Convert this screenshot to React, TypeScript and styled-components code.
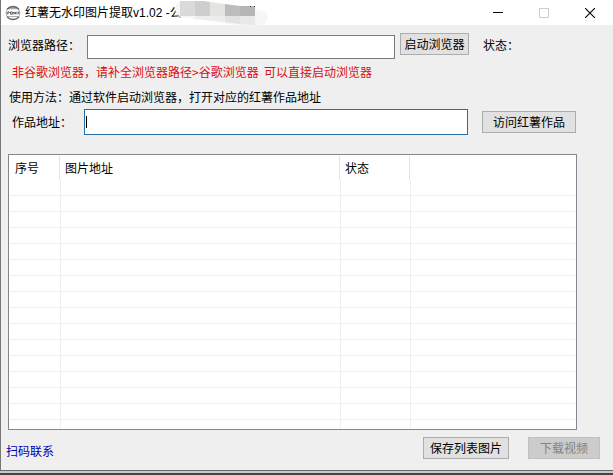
import React from "react";
import styled, { createGlobalStyle } from "styled-components";

const GlobalStyle = createGlobalStyle`
  *, *::before, *::after { box-sizing: border-box; }
  body {
    margin: 0;
    background: #444345;
    color: #000;
    font: 12px/16px "Noto Sans CJK SC", sans-serif;
  }
  button, input { font: inherit; color: inherit; }
`;

const Window = styled.main`
  background: #efefef;
  border-left: 1px solid #777;
  border-bottom: 1px solid #68686a;
  box-shadow: 0 2px 0 #c9c7c9;
  margin-bottom: 4px;
`;

const TitleBar = styled.header`
  display: flex;
  align-items: center;
  height: 25px;
  padding-left: 4px;
  background: #fff;
`;

const Title = styled.h1`
  position: relative;
  flex: 1;
  margin: 0 0 0 4px;
  font: 400 12px/16px "Liberation Sans", "Noto Sans CJK SC", sans-serif;
  white-space: nowrap;
`;

const Mosaic = styled.svg`
  position: absolute;
  left: 149px;
  top: -4px;
`;

const WindowButton = styled.button`
  display: grid;
  place-items: center;
  width: 46px;
  height: 25px;
  padding: 0;
  border: 0;
  background: transparent;
`;

const Form = styled.form`
  padding: 8px 37px 0 7px;
`;

const Row = styled.div`
  display: flex;
  align-items: center;
  height: 26px;
`;

const PathRow = styled(Row)`
  align-items: flex-start;
`;

const PathField = styled.div`
  display: flex;
  flex: 1;
  min-width: 0;
  padding-top: 2px;
  margin-right: 5px;
`;

const VisitSlot = styled.div`
  display: flex;
  margin-left: 14px;
`;

const FieldLabel = styled.label<{ $width: number; $indent: number }>`
  flex: none;
  width: ${(p) => p.$width}px;
  padding-left: ${(p) => p.$indent}px;
  line-height: 24px;
  white-space: nowrap;
`;

const TextBox = styled.input<{ $active?: boolean }>`
  flex: 1;
  min-width: 0;
  height: ${(p) => (p.$active ? 26 : 24)}px;
  padding: 0 2px;
  border: 1px solid ${(p) => (p.$active ? "#2a6da3" : "#7a7a7a")};
  border-radius: 0;
  outline: 0;
  background: #fff
    ${(p) => (p.$active ? "linear-gradient(#000, #000) no-repeat 1px 6px / 1px 12px" : "")};

  &:focus { background-image: none; }
`;

const PushButton = styled.button<{ $width: number }>`
  flex: none;
  width: ${(p) => p.$width}px;
  height: 22px;
  padding: 0;
  border: 1px solid #adadad;
  background: #e1e1e1;
  line-height: 20px;
  white-space: nowrap;

  &:disabled {
    border-color: #bfbfbf;
    background: #cccccc;
    color: #838383;
  }
`;

const Status = styled.output`
  flex: none;
  width: 93px;
  margin-left: 14px;
  line-height: 24px;
`;

const Notice = styled.p`
  margin: 0;
  padding-left: 4px;
  color: #d8100f;
  line-height: 26px;
  white-space: pre;
`;

const Usage = styled.p`
  margin: 0;
  padding-left: 1px;
  line-height: 24px;
  white-space: nowrap;
`;

const ListView = styled.section`
  margin: 19px 36px 0 7px;
  padding: 0 1px 1px;
  border: 1px solid #828790;
  background: #fff;
`;

const Table = styled.table`
  width: 100%;
  table-layout: fixed;
  border-collapse: separate;
  border-spacing: 0;
`;

const HeadCell = styled.th<{ $width?: number }>`
  width: ${(p) => (p.$width ? `${p.$width}px` : "auto")};
  height: 25px;
  padding: 0 0 0 4px;
  font-weight: 400;
  text-align: left;
  background: ${(p) =>
    p.$width ? "linear-gradient(#e2e2e2, #e2e2e2) no-repeat right 1px top 1px / 1px 24px" : "none"};

  &:first-child { padding-left: 5px; }
`;

const Cell = styled.td`
  height: 16px;
  padding: 0;
  border-right: 1px solid #efefef;
  border-bottom: 1px solid #efefef;

  &:last-child { border-right: 0; }
  tr:last-child > & { height: 8px; border-bottom: 0; }
`;

const Footer = styled.footer`
  display: flex;
  align-items: flex-start;
  height: 40px;
  padding: 7px 13px 0 5px;
`;

const ContactLink = styled.a`
  margin-right: auto;
  line-height: 28px;
  color: #0000a8;
  text-decoration: none;
`;

const ButtonGroup = styled.div`
  display: flex;
  gap: 19px;
`;

const columns = [
  { title: "序号", width: 51 },
  { title: "图片地址", width: 280 },
  { title: "状态", width: 70 },
  { title: "" },
];
const rows = Array.from({ length: 16 }, (_, i) => i);

function AppIcon() {
  return (
    <svg width="16" height="16" viewBox="0 0 16 16" aria-hidden="true">
      <circle cx="8" cy="8" r="6.8" fill="#fff" stroke="#aaa" strokeWidth="1" />
      <path d="M2 4.3C4.8 .2 11.2 .2 14 4.3Z" fill="#aaa" />
      <path d="M2 4.3C4.8 .6 11.2 .6 14 4.3M2 11.7C4.8 15.4 11.2 15.4 14 11.7" fill="none" stroke="#666" strokeWidth="1.3" />
      <path d="M3 11.6H13" stroke="#aaa" />
      <path d="M2 9.5 3 6.5 4.6 7.4 3 8.5M5.5 7V9.2H7.4V7ZM8.8 9.3V7L10.4 9.2V6.8M12 6.7V9.4M13.6 6.5V9" fill="none" stroke="#555" strokeWidth=".9" />
    </svg>
  );
}

function TitleMosaic() {
  return (
    <Mosaic width="94" height="27" viewBox="0 0 94 27" aria-hidden="true">
      <path d="M5 0H29L90 10Q98 17 90 23L79 26 6 16Q-3 9 5 0Z" fill="#f6f6f6" />
      <path d="M6 0H21V15H6Z" fill="#d9dbda" />
      <path d="M21 0H30L36 1V15H21Z" fill="#cececf" />
      <path d="M36 1 51 3V15H36Z" fill="#e5e4df" />
      <path d="M51 3 66 5V15H51Z" fill="#bcbcbd" />
      <path d="M66 5H81V15H66Z" fill="#b5b6b7" />
      <path d="M21 15H51V21L21 18Z" fill="#ededed" />
      <path d="M51 15H66V23L51 21Z" fill="#e2e2e2" />
      <path d="M66 15H81V25L66 23Z" fill="#e9e9e9" />
      <path d="M76 5.5H77M80 5.5H81" stroke="#333" />
    </Mosaic>
  );
}

export default function App() {
  return (
    <>
      <GlobalStyle />
      <Window>
        <TitleBar>
          <AppIcon />
          <Title>
            红薯无水印图片提取v1.02 -公
            <TitleMosaic />
          </Title>
          <WindowButton type="button" aria-label="最小化">
            <svg width="10" height="10" viewBox="0 0 10 10">
              <path d="M0 4.5H10" stroke="#000" />
            </svg>
          </WindowButton>
          <WindowButton type="button" aria-label="最大化" disabled>
            <svg width="10" height="10" viewBox="0 0 10 10">
              <path d="M.5 .5H9.5V9.5H.5Z" fill="none" stroke="#ccc" />
            </svg>
          </WindowButton>
          <WindowButton type="button" aria-label="关闭">
            <svg width="10" height="10" viewBox="0 0 10 10">
              <path d="M0 0 10 10M10 0 0 10" stroke="#000" strokeWidth="1.1" />
            </svg>
          </WindowButton>
        </TitleBar>

        <Form onSubmit={(e) => e.preventDefault()}>
          <PathRow>
            <FieldLabel htmlFor="browser-path" $width={79} $indent={0}>浏览器路径：</FieldLabel>
            <PathField>
              <TextBox id="browser-path" type="text" />
            </PathField>
            <PushButton type="button" $width={69}>启动浏览器</PushButton>
            <Status>状态：</Status>
          </PathRow>
          <Notice>{"非谷歌浏览器，请补全浏览器路径>谷歌浏览器  可以直接启动浏览器"}</Notice>
          <Usage>使用方法：通过软件启动浏览器，打开对应的红薯作品地址</Usage>
          <Row>
            <FieldLabel htmlFor="work-url" $width={76} $indent={4}>作品地址：</FieldLabel>
            <TextBox id="work-url" type="text" $active />
            <VisitSlot>
              <PushButton type="submit" $width={94}>访问红薯作品</PushButton>
            </VisitSlot>
          </Row>
        </Form>

        <ListView>
          <Table>
            <thead>
              <tr>
                {columns.map((c, i) => (
                  <HeadCell key={i} scope="col" $width={c.width}>{c.title}</HeadCell>
                ))}
              </tr>
            </thead>
            <tbody>
              {rows.map((r) => (
                <tr key={r}>
                  {columns.map((_, i) => <Cell key={i} />)}
                </tr>
              ))}
            </tbody>
          </Table>
        </ListView>

        <Footer>
          <ContactLink href="#contact">扫码联系</ContactLink>
          <ButtonGroup>
            <PushButton type="button" $width={86}>保存列表图片</PushButton>
            <PushButton type="button" $width={72} disabled>下载视频</PushButton>
          </ButtonGroup>
        </Footer>
      </Window>
    </>
  );
}
